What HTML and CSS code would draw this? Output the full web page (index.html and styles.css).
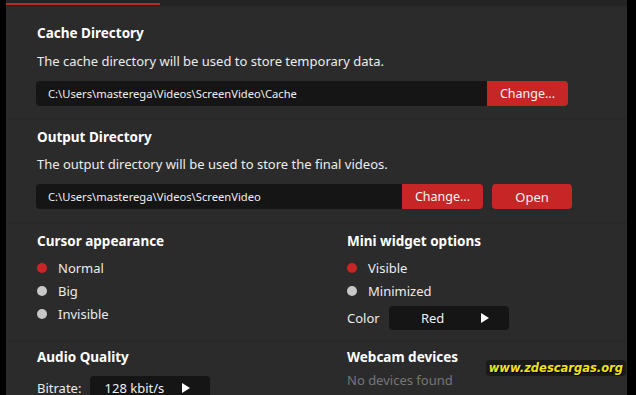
FILE: index.html
```html
<!DOCTYPE html>
<html lang="en">
<head>
  <meta charset="UTF-8" />
  <title>Settings - ScreenVideo</title>
  <link rel="stylesheet" href="styles.css">
</head>
<body>

  <div class="window">
    <div class="tabs">
      <div class="tab-indicator"></div>
    </div>

    <!-- Cache Directory -->
    <section class="panel panel-cache">
      <h3>Cache Directory</h3>
      <p class="desc">The cache directory will be used to store temporary data.</p>
      <div class="path-row">
        <div class="path-field wide">C:\Users\masterega\Videos\ScreenVideo\Cache</div>
        <button class="btn btn-attached">Change...</button>
      </div>
    </section>

    <!-- Output Directory -->
    <section class="panel panel-output">
      <h3>Output Directory</h3>
      <p class="desc">The output directory will be used to store the final videos.</p>
      <div class="path-row">
        <div class="path-field narrow">C:\Users\masterega\Videos\ScreenVideo</div>
        <button class="btn btn-attached">Change...</button>
        <button class="btn btn-open">Open</button>
      </div>
    </section>

    <!-- Cursor / Widget -->
    <section class="panel panel-options">
      <div class="col">
        <h3>Cursor appearance</h3>
        <div class="radio-list">
          <div class="radio checked"><span class="dot"></span>Normal</div>
          <div class="radio"><span class="dot"></span>Big</div>
          <div class="radio"><span class="dot"></span>Invisible</div>
        </div>
      </div>
      <div class="col">
        <h3>Mini widget options</h3>
        <div class="radio-list">
          <div class="radio checked"><span class="dot"></span>Visible</div>
          <div class="radio"><span class="dot"></span>Minimized</div>
        </div>
        <div class="select-row">
          <span class="select-label">Color</span>
          <div class="select">
            <span class="select-value">Red</span>
            <span class="arrow"></span>
          </div>
        </div>
      </div>
    </section>

    <!-- Audio / Webcam -->
    <section class="panel panel-media">
      <div class="col">
        <h3>Audio Quality</h3>
        <div class="select-row bitrate">
          <span class="select-label">Bitrate:</span>
          <div class="select">
            <span class="select-value">128 kbit/s</span>
            <span class="arrow"></span>
          </div>
        </div>
      </div>
      <div class="col">
        <h3>Webcam devices</h3>
        <p class="muted">No devices found</p>
      </div>
    </section>

    <div class="watermark">www.zdescargas.org</div>
  </div>

</body>
</html>
```

FILE: styles.css
```css
:root {
  --panel: #2b2b2b;
  --field: #151515;
  --red: #c62626;
  --text: #f2f2f2;
}
body {
  margin: 0;
  background: #000;
  font-family: 'Noto Sans', 'Open Sans', sans-serif;
  color: var(--text);
  height: 395px;
  overflow: hidden;
}
.window {
  position: relative;
  margin: 0 9px 0 6px;
  height: 395px;
  background: #282828;
  overflow: hidden;
}
.tabs {
  height: 6px;
  background: #232323;
  position: relative;
}
.tab-indicator {
  position: absolute;
  left: 0;
  bottom: 1px;
  width: 154px;
  height: 2px;
  background: #b32b2b;
}
.panel {
  background: var(--panel);
  padding: 8px 31px 13px;
  margin-bottom: 2px;
}
.panel-cache {
  padding-top: 18px;
  padding-bottom: 12px;
}
.panel h3 {
  margin: 0;
  font-size: 13.5px;
  line-height: 18px;
  font-weight: 700;
  color: #fff;
}
.desc {
  margin: 10px 0 0;
  font-size: 13px;
  line-height: 18px;
  color: #ececec;
}
.panel-output .desc {
  margin-top: 9px;
}
.path-row {
  display: flex;
  margin: 11px 0 0 -1px;
  height: 25px;
}
.path-field {
  background: var(--field);
  border-radius: 4px 0 0 4px;
  padding: 0 12px;
  font-size: 11.2px;
  line-height: 25px;
  color: #f0f0f0;
  box-sizing: border-box;
}
.path-field.wide {
  width: 451px;
}
.path-field.narrow {
  width: 366px;
}
.btn {
  border: none;
  background: var(--red);
  color: #f4f4f4;
  font-family: inherit;
  font-size: 12.5px;
  height: 25px;
  width: 81px;
  padding: 0;
  cursor: pointer;
}
.btn-attached {
  border-radius: 0 4px 4px 0;
}
.btn-open {
  margin-left: 9px;
  width: 80px;
  border-radius: 4px;
  font-size: 13px;
}
.panel-options,
.panel-media {
  display: grid;
  grid-template-columns: 310px 1fr;
}
.panel-options {
  padding-top: 8px;
  padding-bottom: 10px;
}
.panel-media {
  padding-top: 6px;
  padding-bottom: 30px;
}
.radio-list {
  display: flex;
  flex-direction: column;
  gap: 5px;
  margin-top: 9px;
}
.radio {
  display: flex;
  align-items: center;
  height: 18px;
  font-size: 13px;
  color: #ececec;
}
.dot {
  width: 10px;
  height: 10px;
  border-radius: 50%;
  background: #c8c8c8;
  margin-right: 11px;
}
.radio.checked .dot {
  background: var(--red);
}
.select-row {
  display: flex;
  align-items: center;
  gap: 9px;
  margin-top: 6px;
  font-size: 13px;
  color: #ececec;
}
.select-row.bitrate {
  margin-top: 10px;
}
.select {
  display: flex;
  align-items: center;
  width: 120px;
  height: 24px;
  background: var(--field);
  border-radius: 4px;
}
.select-value {
  width: 88px;
  text-align: center;
  color: #f0f0f0;
}
.arrow {
  margin-left: 4px;
  width: 0;
  height: 0;
  border-top: 5px solid transparent;
  border-bottom: 5px solid transparent;
  border-left: 8px solid #fff;
}
.muted {
  margin: 5px 0 0;
  font-size: 13px;
  line-height: 18px;
  color: #767676;
}
.watermark {
  position: absolute;
  right: 1px;
  top: 360px;
  padding: 1px 3px;
  background: #1b1b16;
  border-radius: 4px;
  font-family: 'DejaVu Sans', sans-serif;
  font-size: 11.5px;
  font-weight: 700;
  font-style: italic;
  color: #f2e21e;
  text-shadow: 1px 1px 0 #000;
}
```
